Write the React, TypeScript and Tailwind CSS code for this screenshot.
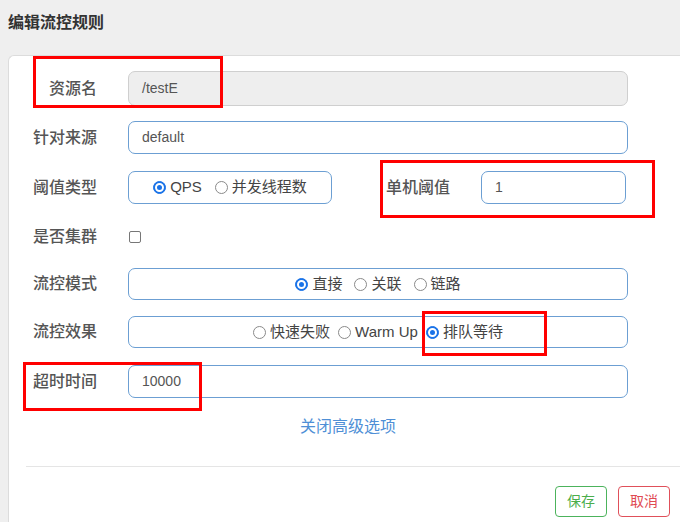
const FONT = { fontFamily: '"Liberation Sans", "Noto Sans CJK SC", sans-serif' };

function Radio({ label, checked }: { label: string; checked?: boolean }) {
  return (
    <span className="flex items-center gap-[4px]">
      {checked ? (
        <span className="w-[13px] h-[13px] rounded-full border border-[#1a73e8] bg-[#1a73e8] flex items-center justify-center">
          <span className="w-[9px] h-[9px] rounded-full border-2 border-white bg-[#1a73e8]" />
        </span>
      ) : (
        <span className="w-[13px] h-[13px] rounded-full border border-[#8a8a8a] bg-white" />
      )}
      <span className="text-[15px] text-[#444]">{label}</span>
    </span>
  );
}

function Label({ children }: { children: string }) {
  return (
    <div className="w-[88px] shrink-0 text-right text-[16px] font-medium text-[#555]">
      {children}
    </div>
  );
}

export default function App() {
  return (
    <div
      className="relative w-[680px] h-[522px] overflow-hidden bg-[#efefef] flex flex-col"
      style={FONT}
    >
      {/* Header */}
      <div className="h-[55px] shrink-0 pl-[8px] pt-[11px]">
        <span className="text-[16px] leading-[18px] font-semibold text-[#333]">编辑流控规则</span>
      </div>

      {/* Body */}
      <div className="flex-1 ml-[8px] bg-white border-t border-l border-[#dcdcdc] rounded-tl-[6px] pt-[15px]">
        {/* 资源名 */}
        <div className="flex items-center h-[35px]">
          <Label>资源名</Label>
          <div className="ml-[31px] w-[500px] h-[35px] rounded-[7px] border border-[#cfcfcf] bg-[#eeeeee] flex items-center px-[13px] text-[14px] text-[#555]">
            /testE
          </div>
        </div>

        {/* 针对来源 */}
        <div className="flex items-center h-[33px] mt-[15px]">
          <Label>针对来源</Label>
          <div className="ml-[31px] w-[500px] h-[33px] rounded-[7px] border border-[#6c9fd3] flex items-center px-[13px] text-[14px] text-[#555]">
            default
          </div>
        </div>

        {/* 阈值类型 + 单机阈值 */}
        <div className="flex items-center h-[33px] mt-[17px]">
          <Label>阈值类型</Label>
          <div className="ml-[31px] w-[204px] h-[33px] rounded-[7px] border border-[#6c9fd3] flex items-center justify-center gap-[13px]">
            <Radio label="QPS" checked />
            <Radio label="并发线程数" />
          </div>
          <div className="ml-[54px] text-[16px] font-medium text-[#555]">单机阈值</div>
          <div className="ml-[31px] w-[145px] h-[33px] rounded-[7px] border border-[#6c9fd3] flex items-center px-[13px] text-[14px] text-[#555]">
            1
          </div>
        </div>

        {/* 是否集群 */}
        <div className="flex items-center h-[33px] mt-[16px]">
          <Label>是否集群</Label>
          <div className="ml-[32px] w-[12px] h-[12px] rounded-[2px] border border-[#777] bg-white" />
        </div>

        {/* 流控模式 */}
        <div className="flex items-center h-[32px] mt-[15px]">
          <Label>流控模式</Label>
          <div className="ml-[31px] w-[500px] h-[32px] rounded-[7px] border border-[#6c9fd3] flex items-center justify-center gap-[12px]">
            <Radio label="直接" checked />
            <Radio label="关联" />
            <Radio label="链路" />
          </div>
        </div>

        {/* 流控效果 */}
        <div className="flex items-center h-[32px] mt-[16px]">
          <Label>流控效果</Label>
          <div className="ml-[31px] w-[500px] h-[32px] rounded-[7px] border border-[#6c9fd3] flex items-center justify-center gap-[8px]">
            <Radio label="快速失败" />
            <Radio label="Warm Up" />
            <Radio label="排队等待" checked />
          </div>
        </div>

        {/* 超时时间 */}
        <div className="flex items-center h-[33px] mt-[17px]">
          <Label>超时时间</Label>
          <div className="ml-[31px] w-[500px] h-[33px] rounded-[7px] border border-[#6c9fd3] flex items-center px-[13px] text-[14px] text-[#555]">
            10000
          </div>
        </div>

        <div className="mt-[18px] pl-[291px] text-[16px] text-[#4f8fd6] leading-[22px]">关闭高级选项</div>

        <div className="mt-[28px] ml-[17px] border-t border-[#e5e5e5]" />

        <div className="flex justify-end gap-[11px] pr-[10px] mt-[19px]">
          <button className="w-[52px] h-[31px] rounded-[4px] border border-[#4cb35c] text-[#4cae4c] text-[14px] bg-white">
            保存
          </button>
          <button className="w-[52px] h-[31px] rounded-[4px] border border-[#e0505a] text-[#e04a52] text-[14px] bg-white">
            取消
          </button>
        </div>
      </div>

      {/* Red annotation boxes */}
      <div className="absolute left-[33px] top-[56px] w-[190px] h-[52px] border-[3px] border-[#ff0000]" />
      <div className="absolute left-[380px] top-[160px] w-[275px] h-[58px] border-[3px] border-[#ff0000]" />
      <div className="absolute left-[422px] top-[311px] w-[125px] h-[45px] border-[3px] border-[#ff0000]" />
      <div className="absolute left-[23px] top-[362px] w-[179px] h-[49px] border-[3px] border-[#ff0000]" />
    </div>
  );
}
